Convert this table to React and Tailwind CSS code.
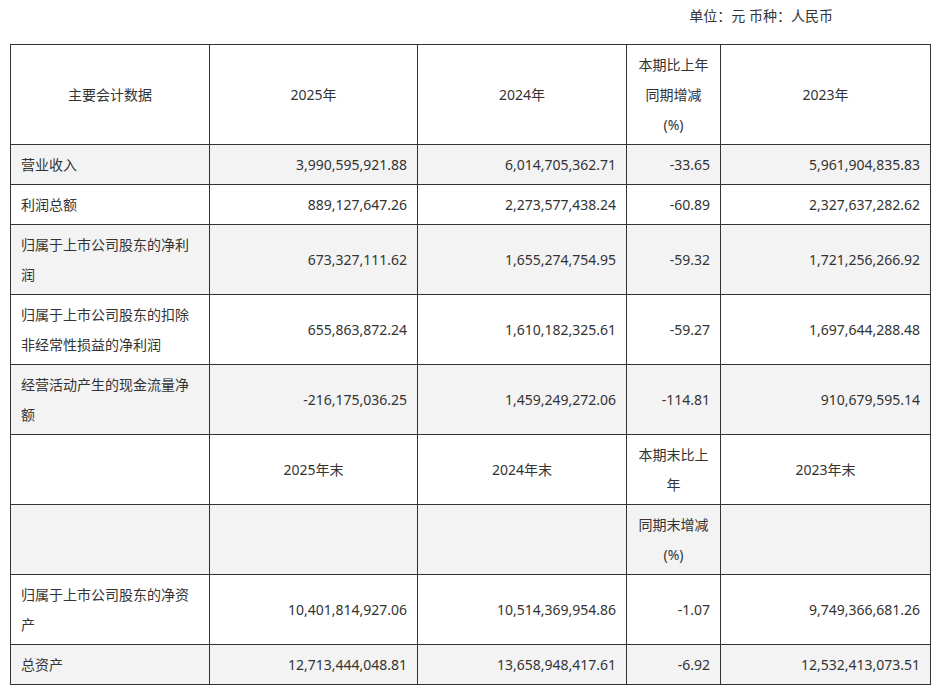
import React from 'react';

const rows = [
  { label: '营业收入', v: ['3,990,595,921.88', '6,014,705,362.71', '-33.65', '5,961,904,835.83'] },
  { label: '利润总额', v: ['889,127,647.26', '2,273,577,438.24', '-60.89', '2,327,637,282.62'] },
  { label: ['归属于上市公司股东的净利', '润'], v: ['673,327,111.62', '1,655,274,754.95', '-59.32', '1,721,256,266.92'] },
  { label: ['归属于上市公司股东的扣除', '非经常性损益的净利润'], v: ['655,863,872.24', '1,610,182,325.61', '-59.27', '1,697,644,288.48'] },
  { label: ['经营活动产生的现金流量净', '额'], v: ['-216,175,036.25', '1,459,249,272.06', '-114.81', '910,679,595.14'] },
];

const rows2 = [
  { label: ['归属于上市公司股东的净资', '产'], v: ['10,401,814,927.06', '10,514,369,954.86', '-1.07', '9,749,366,681.26'] },
  { label: '总资产', v: ['12,713,444,048.81', '13,658,948,417.61', '-6.92', '12,532,413,073.51'] },
];

const td = 'border border-[#333] px-[10px] py-[4.5px] align-middle';

function Label({ label }) {
  if (Array.isArray(label)) {
    return label.map((l, i) => <div key={i}>{l}</div>);
  }
  return label;
}

function DataRow({ row, gray }) {
  return (
    <tr className={gray ? 'bg-[#f3f3f3]' : 'bg-white'}>
      <td className={`${td} text-left`}>
        <Label label={row.label} />
      </td>
      {row.v.map((x, i) => (
        <td key={i} className={`${td} text-right`}>{x}</td>
      ))}
    </tr>
  );
}

export default function App() {
  return (
    <div
      className="w-[944px] h-[694px] bg-white text-[#333] text-[14px] leading-[30px]"
      style={{ fontFamily: '"Noto Sans", "Noto Sans CJK SC", sans-serif' }}
    >
      <div className="h-[44px] pt-[6px] pr-[111px] text-right leading-[20px]">单位：元 币种：人民币</div>
      <table className="ml-[10px] w-[920px] table-fixed border-collapse">
        <colgroup>
          <col className="w-[199px]" />
          <col className="w-[208px]" />
          <col className="w-[209px]" />
          <col className="w-[94px]" />
          <col className="w-[210px]" />
        </colgroup>
        <tbody>
          <tr className="bg-white text-center">
            <td className={td}>主要会计数据</td>
            <td className={td}>2025年</td>
            <td className={td}>2024年</td>
            <td className={td}>
              <div>本期比上年</div>
              <div>同期增减</div>
              <div>(%)</div>
            </td>
            <td className={td}>2023年</td>
          </tr>
          {rows.map((r, i) => (
            <DataRow key={i} row={r} gray={i % 2 === 0} />
          ))}
          <tr className="bg-white text-center">
            <td className={td}>
              <div>&nbsp;</div>
              <div>&nbsp;</div>
            </td>
            <td className={td}>2025年末</td>
            <td className={td}>2024年末</td>
            <td className={td}>
              <div>本期末比上</div>
              <div>年</div>
            </td>
            <td className={td}>2023年末</td>
          </tr>
          <tr className="bg-[#f3f3f3] text-center">
            <td className={td}></td>
            <td className={td}></td>
            <td className={td}></td>
            <td className={td}>
              <div>同期末增减</div>
              <div>(%)</div>
            </td>
            <td className={td}></td>
          </tr>
          {rows2.map((r, i) => (
            <DataRow key={i} row={r} gray={i % 2 === 1} />
          ))}
        </tbody>
      </table>
    </div>
  );
}
